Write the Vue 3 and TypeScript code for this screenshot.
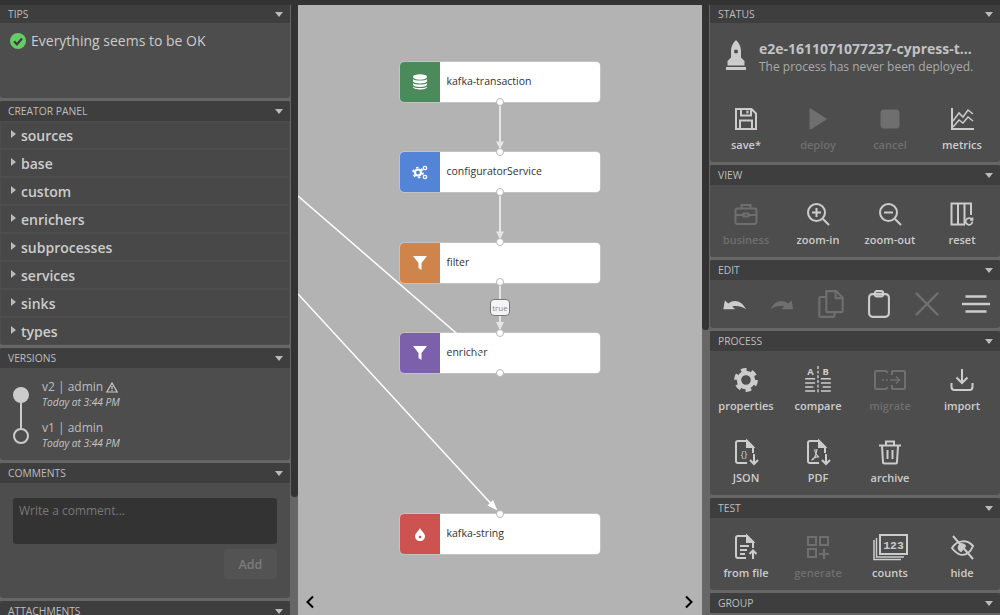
<script setup lang="ts">
interface Tool { label?: string; icon: string; off?: boolean; vb?: string; w?: number; h?: number }
const icons: Record<string, string> = {
  save: '<path d="M2 2h15.500L22 6.500V22H2z"/><path d="M7 2v6.500h10V2M13.500 3.500v3"/><path d="M6 22v-8.500h12V22"/>',
  deploy: '<path fill="currentColor" stroke-linejoin="round" d="M4.500 2.500 19.500 12 4.500 21.500z"/>',
  cancel: '<rect x="3.500" y="3.500" width="17" height="17" rx="2.500" fill="currentColor"/>',
  metrics: '<path d="M2 1v21h22"/><path d="M3 14l6-8 4 4 5-7 5 4M3 20l6-7 4 3 5-6 5 4" stroke-width="1.500"/>',
  business: '<rect x="1.500" y="6.500" width="21" height="15.500" rx="2"/><path d="M7.500 6.500V3h9v3.500M1.500 13h8M14.500 13h8M9.500 11.500h5v3h-5z"/>',
  zoomIn: '<circle cx="10.500" cy="10.500" r="8.500"/><path d="M6 10.500h9M10.500 6v9M17 17l6 6"/>',
  zoomOut: '<circle cx="10.500" cy="10.500" r="8.500"/><path d="M6 10.500h9M17 17l6 6"/>',
  reset: '<path d="M21 13V1.500H1.500v21H15M8 1.500v21M14.500 1.500v21"/><path d="M22.500 19.500a3.400 3.400 0 1 1-1-2.500M22.500 15.500V18H20" stroke-width="1.700"/>',
  undo: '<g transform="translate(2 3) scale(.85)"><path fill="currentColor" stroke="none" d="M1 16 2.500 7l3.500 3c6-4.500 13.500-3 18 6-5-3.500-10-4-14-3L13 16z"/></g>',
  redo: '<g transform="translate(2 3) scale(.85)"><path fill="currentColor" stroke="none" d="M23 16 21.500 7 18 10C12 5.500 4.500 7 0 16c5-3.500 10-4 14-3L11 16z"/></g>',
  copy: '<path d="M8 1h8.500L22 6.500V18a1 1 0 0 1-1 1H9a1 1 0 0 1-1-1zM16 1v6h6"/><path d="M8 6H3a1 1 0 0 0-1 1v15a1 1 0 0 0 1 1h11a1 1 0 0 0 1-1v-3"/>',
  paste: '<rect x="3.500" y="3.500" width="17" height="19.500" rx="3"/><rect x="8.500" y="1" width="7" height="4.500" rx="1.500"/>',
  close: '<path d="M2.500 2.500l19 19M21.500 2.500l-19 19" stroke-width="2"/>',
  menu: '<path d="M3 5.500h18M-.5 12h25M3 18.500h18" stroke-width="2.200"/>',
  gear: '<circle cx="12" cy="12" r="7" stroke-width="4.400"/><circle cx="12" cy="12" r="10" stroke-width="3.800" stroke-dasharray="5.500 4.970"/>',
  compare: '<text x="5.500" y="8" font-size="8" font-weight="700" text-anchor="middle" fill="currentColor" stroke="none" font-family="Open Sans">A</text><text x="18.500" y="8" font-size="8" font-weight="700" text-anchor="middle" fill="currentColor" stroke="none" font-family="Open Sans">B</text><path d="M12 0v24" stroke-dasharray="2.500 1.500" stroke-width="1.200"/><path d="M1 11h8.500M1 14.500h8.500M1 18h7M1 21.500h8.500M14.500 11h8.500M14.500 14.500h8.500M16 18h7M14.500 21.500h8.500" stroke-width="1.300"/>',
  migrate: '<path d="M13 3H2a1 1 0 0 0-1 1v16a1 1 0 0 0 1 1h11M18 3h12a1 1 0 0 1 1 1v16a1 1 0 0 1-1 1H18M18 3v4M18 17v4M13 3v2M13 19v2"/><path d="M8 12h2M12 12h2M16 12h9M22 8.500l3.500 3.500-3.500 3.500" stroke-width="1.500"/>',
  import: '<path d="M12 1v14M6.500 9.500 12 15l5.500-5.500"/><path d="M1.500 15v4a3 3 0 0 0 3 3h15a3 3 0 0 0 3-3v-4"/>',
  json: '<path d="M13 23H4a2 2 0 0 1-2-2V3a2 2 0 0 1 2-2h9l6 6v6"/><path fill="currentColor" d="M13 1v6h6z"/><text x="10" y="18" font-size="9.500" text-anchor="middle" fill="currentColor" stroke="none" font-family="Open Sans">{}</text><path d="M20 14v10M16 20l4 4 4-4"/>',
  pdf: '<path d="M13 23H4a2 2 0 0 1-2-2V3a2 2 0 0 1 2-2h9l6 6v6"/><path fill="currentColor" d="M13 1v6h6z"/><path d="M9 9c-1 3 2 7 4 8-4-.500-7 2-7 3 1 0 4-3 5-11" stroke-width="1.200"/><path d="M20 14v10M16 20l4 4 4-4"/>',
  trash: '<path d="M4 6l1 16a1.500 1.500 0 0 0 1.500 1.500h11A1.500 1.500 0 0 0 19 22l1-16M1 5.500h22M8 5V1.500h8V5M9.500 10v9M14.500 10v9"/>',
  fromFile: '<path d="M12 23H4a2 2 0 0 1-2-2V3a2 2 0 0 1 2-2h9l6 6v6"/><path fill="currentColor" d="M13 1v6h6z"/><path d="M6 11h9M6 15h7M6 19h5"/><path d="M19 24v-8M15.500 19l3.500-3.500 3.500 3.500" stroke-width="2"/>',
  generate: '<path d="M2 2h8v8H2zM14 2h8v8h-8zM2 14h8v8H2z"/><path d="M18 14v10M13 19h10" stroke-width="2.200"/>',
  counts: '<path d="M7 1h27v19H7z"/><path d="M3.500 4v19H31M1 6v19.500h27" stroke-width="1.500"/><text x="20.500" y="15" font-size="11.500" font-weight="700" text-anchor="middle" fill="currentColor" stroke="none" font-family="Liberation Mono">123</text>',
  hide: '<path d="M2 13c5-8 15-9 21-2 0 0-2 5-5 7-4 3-10 3-16-5z"/><path d="M9 11c2-3 5-2 6 0l-4 5c-2-1-3-3-2-5z" fill="currentColor"/><path d="M3 1l20 23"/>',
}
const statusTools: Tool[] = [
  { label: 'save*', icon: 'save' }, { label: 'deploy', icon: 'deploy', off: true },
  { label: 'cancel', icon: 'cancel', off: true }, { label: 'metrics', icon: 'metrics' },
]
const viewTools: Tool[] = [
  { label: 'business', icon: 'business', off: true }, { label: 'zoom-in', icon: 'zoomIn' },
  { label: 'zoom-out', icon: 'zoomOut' }, { label: 'reset', icon: 'reset' },
]
const editTools: Tool[] = [
  { icon: 'undo' }, { icon: 'redo', off: true }, { icon: 'copy', off: true },
  { icon: 'paste' }, { icon: 'close', off: true }, { icon: 'menu' },
]
const processTools: Tool[] = [
  { label: 'properties', icon: 'gear' }, { label: 'compare', icon: 'compare', w: 28, h: 28 },
  { label: 'migrate', icon: 'migrate', off: true, vb: '0 0 32 24', w: 32, h: 24 }, { label: 'import', icon: 'import' },
  { label: 'JSON', icon: 'json' }, { label: 'PDF', icon: 'pdf' }, { label: 'archive', icon: 'trash' },
]
const testTools: Tool[] = [
  { label: 'from file', icon: 'fromFile' }, { label: 'generate', icon: 'generate', off: true },
  { label: 'counts', icon: 'counts', vb: '0 0 35 26', w: 35, h: 26 }, { label: 'hide', icon: 'hide' },
]
const groups = ['sources', 'base', 'custom', 'enrichers', 'subprocesses', 'services', 'sinks', 'types']
const versions = [
  { name: 'v2 | admin', warn: true, full: true },
  { name: 'v1 | admin', warn: false, full: false },
]
const nodes = [
  { id: 'kafka-transaction', y: 62, kind: 'db' },
  { id: 'configuratorService', y: 152, kind: 'cogs' },
  { id: 'filter', y: 242.5, kind: 'filter' },
  { id: 'enricher', y: 333, kind: 'enrich' },
  { id: 'kafka-string', y: 514, kind: 'sink' },
]
const ports = [102, 152, 192, 242, 282, 333, 373, 514]
const centerX = 202
</script>

<template>
  <div class="page">
    <div class="topbar"></div>
    <div class="main">
      <aside class="side left">
        <div class="stack">
          <section class="panel first">
            <header class="head">TIPS<i class="caret"></i></header>
            <div class="tips">
              <svg width="16" height="16" viewBox="0 0 16 16"><circle cx="8" cy="8" r="8" fill="#66cc66"/><path d="M4 8.300l3 3 5-5.800" fill="none" stroke="#3d3d3d" stroke-width="2.200"/></svg>
              <span>Everything seems to be OK</span>
            </div>
          </section>
          <section class="panel">
            <header class="head">CREATOR PANEL<i class="caret"></i></header>
            <div class="groups">
              <div v-for="g in groups" :key="g" class="group"><i class="tri"></i>{{ g }}</div>
            </div>
          </section>
          <section class="panel">
            <header class="head">VERSIONS<i class="caret"></i></header>
            <div class="versions">
              <div v-for="v in versions" :key="v.name" class="version">
                <span class="dot" :class="{ full: v.full }"></span>
                <div>
                  <div class="vname">{{ v.name }}
                    <svg v-if="v.warn" width="12" height="11" viewBox="0 0 12 11"><path d="M6 1 .8 10h10.400z" fill="none" stroke="#ccc" stroke-width="1.200"/><path d="M6 4v3.200M6 8v1" stroke="#ccc" stroke-width="1.200"/></svg>
                  </div>
                  <div class="vtime">Today at 3:44 PM</div>
                </div>
              </div>
            </div>
          </section>
          <section class="panel">
            <header class="head">COMMENTS<i class="caret"></i></header>
            <div class="comments">
              <textarea class="input" placeholder="Write a comment..."></textarea>
              <button class="add">Add</button>
            </div>
          </section>
          <section class="panel">
            <header class="head">ATTACHMENTS<i class="caret"></i></header>
          </section>
        </div>
        <div class="track"><div class="thumb thumb-left"></div></div>
      </aside>

      <div class="canvas">
        <div v-for="n in nodes" :key="n.id" class="node" :style="{ top: n.y - 5 + 'px' }">
          <div class="nicon" :class="n.kind">
            <svg v-if="n.kind === 'db'" width="16" height="16" viewBox="0 0 16 16" fill="#fff">
              <ellipse cx="8" cy="3" rx="7" ry="2.700"/>
              <path d="M1 5c1 2 13 2 14 0v2.500c-1 2.500-13 2.500-14 0zM1 9c1 2 13 2 14 0v2c-1 2.500-13 2.500-14 0zM1 12.500c1 2 13 2 14 0v.800c-1 3-13 3-14 0z"/>
            </svg>
            <svg v-else-if="n.kind === 'cogs'" width="16" height="15" viewBox="0 0 16 15" fill="none" stroke="#fff">
              <circle cx="6" cy="7.500" r="3" stroke-width="2.200"/>
              <circle cx="6" cy="7.500" r="5" stroke-width="1.600" stroke-dasharray="2.500 2.740"/>
              <circle cx="13" cy="3" r="1.700" stroke-width="1.300"/>
              <circle cx="13" cy="12" r="1.700" stroke-width="1.300"/>
            </svg>
            <svg v-else-if="n.kind === 'sink'" width="10" height="13" viewBox="0 0 10 13">
              <path d="M5 0c1 3 5 5 5 8.200A5 5 0 0 1 0 8.200C0 5 4 3 5 0z" fill="#fff"/><circle cx="5" cy="9" r="1.300" fill="#cc5350"/>
            </svg>
            <svg v-else width="14" height="14" viewBox="0 0 14 14"><path d="M0 0h14L8.500 7v7L5.500 12V7z" fill="#fff"/></svg>
          </div>
          <div class="nlabel">{{ n.id }}</div>
        </div>
        <svg class="edges" width="404" height="610" viewBox="0 0 404 610">
          <path d="M0 191 202 366" stroke="#fff" stroke-width="1.500" fill="none"/>
          <path d="M0 289 197 503" stroke="#fff" stroke-width="1.500" fill="none"/>
          <path d="M199.500 505.500 189.500 500.500 195 495z" fill="#fff"/>
          <path d="M202 97v47M202 187v47M202 277v49" stroke="#e6e6e6" stroke-width="2" fill="none"/>
          <path d="M198 136.500h8l-4 7.500zM198 226.500h8l-4 7.500zM198 317h8l-4 8z" fill="#e6e6e6"/>
          <circle v-for="p in ports" :key="p" :cx="centerX" :cy="p - 5" r="3.500" fill="#fff" stroke="#b8b8b8"/>
          <rect x="192.500" y="294.500" width="19" height="16" rx="3.500" fill="#f4f4f4" stroke="#777"/>
          <text x="202" y="305.500" font-size="8" text-anchor="middle" fill="#8a8a8a" font-family="Open Sans">true</text>
        </svg>
        <svg class="pager prev" width="10" height="14" viewBox="0 0 10 14"><path d="M8 1.500 2.500 7 8 12.500" fill="none" stroke="#000" stroke-width="2"/></svg>
        <svg class="pager next" width="10" height="14" viewBox="0 0 10 14"><path d="M2 1.500 7.500 7 2 12.500" fill="none" stroke="#000" stroke-width="2"/></svg>
      </div>

      <aside class="side right">
        <div class="track rtrack"><div class="thumb thumb-right"></div></div>
        <div class="stack">
          <section class="panel first">
            <header class="head">STATUS<i class="caret"></i></header>
            <div class="status">
              <svg width="20" height="30" viewBox="0 0 20 30" fill="#ccc">
                <path fill-rule="evenodd" d="M10 0c3.500 3 5 7 5 11v6.500l3.500 3.500v4.500H1.500V21L5 17.500V11C5 7 6.500 3 10 0zm0 9.500a2 2 0 1 0 0 4 2 2 0 0 0 0-4z"/>
                <rect y="27" width="20" height="3"/>
              </svg>
              <div class="stext">
                <div class="sname">e2e-1611071077237-cypress-t...</div>
                <div class="ssub">The process has never been deployed.</div>
              </div>
            </div>
            <div class="tools">
              <button v-for="t in statusTools" :key="t.icon" class="tool" :class="{ off: t.off }">
                <span class="ticon"><svg :width="t.w || 24" :height="t.h || 24" :viewBox="t.vb || '0 0 24 24'" fill="none" stroke="currentColor" stroke-width="2" v-html="icons[t.icon]"></svg></span>
                <span class="tlabel">{{ t.label }}</span>
              </button>
            </div>
          </section>
          <section class="panel">
            <header class="head">VIEW<i class="caret"></i></header>
            <div class="tools">
              <button v-for="t in viewTools" :key="t.icon" class="tool" :class="{ off: t.off }">
                <span class="ticon"><svg :width="t.w || 24" :height="t.h || 24" :viewBox="t.vb || '0 0 24 24'" fill="none" stroke="currentColor" stroke-width="2" v-html="icons[t.icon]"></svg></span>
                <span class="tlabel">{{ t.label }}</span>
              </button>
            </div>
          </section>
          <section class="panel">
            <header class="head">EDIT<i class="caret"></i></header>
            <div class="edit">
              <button v-for="t in editTools" :key="t.icon" class="etool" :class="{ off: t.off }">
                <svg width="28" height="28" viewBox="0 0 24 24" fill="none" stroke="currentColor" stroke-width="1.800" v-html="icons[t.icon]"></svg>
              </button>
            </div>
          </section>
          <section class="panel">
            <header class="head">PROCESS<i class="caret"></i></header>
            <div class="tools">
              <button v-for="t in processTools" :key="t.icon" class="tool" :class="{ off: t.off }">
                <span class="ticon"><svg :width="t.w || 24" :height="t.h || 24" :viewBox="t.vb || '0 0 24 24'" fill="none" stroke="currentColor" stroke-width="2" v-html="icons[t.icon]"></svg></span>
                <span class="tlabel">{{ t.label }}</span>
              </button>
            </div>
          </section>
          <section class="panel">
            <header class="head">TEST<i class="caret"></i></header>
            <div class="tools">
              <button v-for="t in testTools" :key="t.icon" class="tool" :class="{ off: t.off }">
                <span class="ticon"><svg :width="t.w || 24" :height="t.h || 24" :viewBox="t.vb || '0 0 24 24'" fill="none" stroke="currentColor" stroke-width="2" v-html="icons[t.icon]"></svg></span>
                <span class="tlabel">{{ t.label }}</span>
              </button>
            </div>
          </section>
          <section class="panel">
            <header class="head">GROUP<i class="caret"></i></header>
          </section>
        </div>
      </aside>
    </div>
  </div>
</template>

<style>
html, body { margin: 0; overflow: hidden; }
</style>

<style scoped>
.page { height: 615px; width: 1000px; display: flex; flex-direction: column; background: #666; overflow: hidden; font-family: "Open Sans", sans-serif; color: #ccc; }
.topbar { height: 5px; flex: none; background: #333; }
.main { flex: 1; display: flex; min-height: 0; }
.side { flex: none; width: 298px; display: flex; height: 610px; overflow: hidden; }
.stack { width: 290px; flex: none; display: flex; flex-direction: column; gap: 3px; }
.track { width: 8px; flex: none; }
.left .track { padding-left: 1px; box-sizing: border-box; }
.rtrack { padding-right: 1px; box-sizing: border-box; }
.thumb { width: 7px; background: #333; border-radius: 0 0 4px 4px; }
.thumb-left { height: 492px; }
.thumb-right { height: 325px; }
.panel { background: #4d4d4d; border-radius: 0 0 3px 3px; flex: none; }
.head { height: 20px; background: #3e3e3e; display: flex; align-items: center; justify-content: space-between; padding: 0 7px 0 8px; font-size: 10.3px; line-height: 20px; color: #bdbdbd; border-radius: 3px 3px 0 0; }
.first .head { height: 18px; border-radius: 0; }
.caret { width: 0; height: 0; border-left: 4.500px solid transparent; border-right: 4.500px solid transparent; border-top: 5px solid #bbb; }
.tips { height: 75px; box-sizing: border-box; padding: 10px 10px 0; display: flex; align-items: flex-start; gap: 5px; font-size: 14px; line-height: 16px; }
.groups { padding: 1px; display: flex; flex-direction: column; gap: 2px; }
.group { height: 26px; background: #484848; display: flex; align-items: center; font-size: 14px; font-weight: 600; color: #ccc; padding-left: 10px; }
.tri { width: 0; height: 0; border-top: 4px solid transparent; border-bottom: 4px solid transparent; border-left: 5px solid #bbb; margin-right: 5px; margin-top: -2px; }
.versions { height: 92px; box-sizing: border-box; padding-top: 10px; }
.version { display: flex; height: 41px; padding-left: 13px; gap: 13px; font-size: 12px; }
.dot { width: 12px; height: 12px; margin-top: 9px; border: 2px solid #ccc; border-radius: 50%; flex: none; background: #4d4d4d; position: relative; }
.dot.full { background: #ccc; }
.dot.full::after { content: ""; position: absolute; left: 5px; top: 14px; width: 2px; height: 26px; background: #ccc; }
.vname { line-height: 18px; display: flex; align-items: center; gap: 3px; color: #bdbdbd; }
.vtime { font-size: 10.2px; font-style: italic; line-height: 13px; color: #c4c4c4; }
.comments { height: 115px; box-sizing: border-box; padding: 15px 13px 0; display: flex; flex-direction: column; align-items: flex-end; gap: 5px; }
.input { width: 264px; height: 46px; box-sizing: border-box; background: #333; border: 0; border-radius: 3px; padding: 4px 6px; resize: none; font: 12px "Open Sans", sans-serif; color: #ccc; outline: none; overflow: hidden; }
.input::placeholder { color: #777; opacity: 1; }
.add { width: 53px; height: 30px; background: #535353; border: 0; border-radius: 3px; color: #7c7c7c; font: 600 12.5px "Open Sans", sans-serif; padding: 0; }
.status { height: 67px; box-sizing: border-box; display: flex; align-items: flex-start; padding: 17px 0 0 16px; gap: 13px; }
.stext { white-space: nowrap; margin-top: -1px; }
.sname { font-size: 14px; font-weight: 700; line-height: 19px; color: #c2c2c2; }
.ssub { font-size: 12px; line-height: 18px; color: #aaa; }
.tools { display: grid; grid-template-columns: repeat(4, 72px); }
.tool { height: 72px; box-sizing: border-box; padding: 16px 0 0; background: none; border: 0; color: #ccc; display: flex; flex-direction: column; align-items: center; font-family: inherit; }
.ticon { height: 25px; flex: none; display: flex; align-items: center; justify-content: center; }
.ticon svg { overflow: visible; }
.tlabel { font-size: 11px; font-weight: 600; line-height: 16px; margin-top: 6px; }
.off { color: #6f6f6f; }
.edit { height: 48px; display: grid; grid-template-columns: repeat(6, 48.333px); align-items: center; }
.etool { background: none; border: 0; padding: 0; color: #ccc; display: flex; justify-content: center; }
.etool.off { color: #6f6f6f; }
.canvas { flex: none; width: 404px; height: 610px; background: #b3b3b3; position: relative; overflow: hidden; }
.node { position: absolute; left: 102px; width: 200px; height: 40px; border-radius: 4px; display: flex; background: #fff; overflow: hidden; box-shadow: 0 0 0 .5px rgba(255,255,255,.4); }
.nicon { width: 39.500px; display: flex; align-items: center; justify-content: center; flex: none; }
.db { background: #4a8a5b; }
.cogs { background: #5484d8; }
.filter { background: #cf844c; }
.enrich { background: #7c60ac; }
.sink { background: #cc5350; }
.nlabel { font-size: 10.5px; line-height: 38px; padding-left: 7px; color: #333; }
.edges { position: absolute; left: 0; top: 0; }
.pager { position: absolute; top: 590px; }
.prev { left: 7px; }
.next { left: 386px; }
</style>
